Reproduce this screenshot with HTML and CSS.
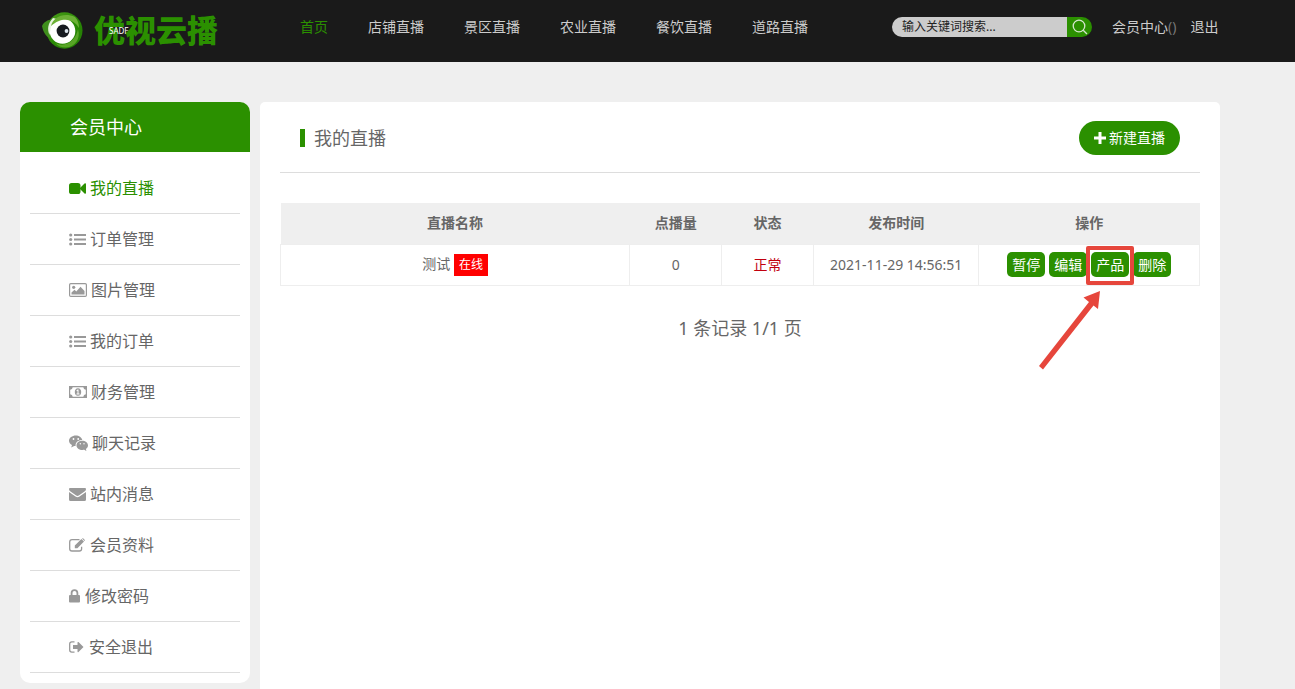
FILE: index.html
```html
<!DOCTYPE html>
<html lang="zh-CN">
<head>
<meta charset="utf-8">
<title>会员中心 - 我的直播</title>
<link rel="stylesheet" href="styles.css">
</head>
<body>
<header class="topbar">
  <a class="logo" href="#">
    <svg class="logo-mark" viewBox="0 0 42 38" aria-hidden="true">
      <defs>
        <linearGradient id="ring" x1="0" y1="0" x2="1" y2="1">
          <stop offset="0" stop-color="#4f9f1c"/>
          <stop offset="0.5" stop-color="#2a8a05"/>
          <stop offset="1" stop-color="#237d04"/>
        </linearGradient>
      </defs>
      <ellipse cx="22.500" cy="19.500" rx="18" ry="18.200" fill="url(#ring)"/>
      <path d="M0 15C2 11 5 9 11 8C7 14 6 21 9 28C3 25 1 20 0 15Z" fill="#3f8f1c"/>
      <circle cx="20.500" cy="20" r="12.800" fill="#fff"/>
      <path d="M11 7C6 12 5 18 7.500 24L9 16Q11 11 15 8Z" fill="#e9f4e2"/>
      <path d="M9 15C11 6 22 1 33 6C36 9 37 13 37 17C33 9 21 4 9 15Z" fill="#6bb035"/>
      <path d="M13 32C23 37 34 30 36 18C39 28 33 36 24 36.500C19 36.500 16 35 13 32Z" fill="#58a426"/>
      <circle cx="21" cy="20" r="6.400" fill="#171a20"/>
      <circle cx="24.500" cy="20" r="1.900" fill="#dbe4ec"/>
    </svg>
    <span class="logo-name">优视云播<span class="logo-tag">SADF</span></span>
  </a>
  <nav class="mainnav" aria-label="主导航">
    <a class="is-active" href="#">首页</a>
    <a href="#">店铺直播</a>
    <a href="#">景区直播</a>
    <a href="#">农业直播</a>
    <a href="#">餐饮直播</a>
    <a href="#">道路直播</a>
  </nav>
  <form class="search">
    <input type="text" placeholder="输入关键词搜索..." aria-label="搜索">
    <button type="button" aria-label="搜索">
      <svg width="16" height="16" viewBox="0 0 16 16" fill="none" stroke="#d4e5cc" stroke-width="1.300" aria-hidden="true"><circle cx="7" cy="7" r="5.800"/><path d="M11.200 11.200L15 15"/></svg>
    </button>
  </form>
  <div class="account"><a href="#">会员中心<span class="dim">()</span></a><a href="#">退出</a></div>
</header>

<div class="page">
  <aside class="sidebar">
    <h2>会员中心</h2>
    <ul>
      <li><a class="is-active" href="#"><svg width="17" height="13" viewBox="0 0 17 13" fill="currentColor" aria-hidden="true"><rect x="0" y="1" width="11.500" height="11" rx="2.600"/><path d="M11 6L15.500 1.500Q17 .8 17 2.200V10.800Q17 12.200 15.500 11.500L11 7Z"/></svg>我的直播</a></li>
      <li><a href="#"><svg width="17" height="13" viewBox="0 0 17 13" fill="currentColor" aria-hidden="true"><circle cx="1.700" cy="2" r="1.600"/><circle cx="1.700" cy="6.500" r="1.600"/><circle cx="1.700" cy="11" r="1.600"/><path d="M5 1h12v2H5zM5 5.500h12v2H5zM5 10h12v2H5z"/></svg>订单管理</a></li>
      <li><a href="#"><svg width="18" height="14" viewBox="0 0 18 14" fill="currentColor" aria-hidden="true"><rect x=".6" y=".6" width="16.800" height="12.800" rx="1.200" fill="none" stroke="currentColor" stroke-width="1.200"/><circle cx="4.700" cy="4.300" r="1.600"/><path d="M2.500 11.500V9.500L5.500 6.800L7.300 8.500L11.500 3.800L15.500 8V11.500Z"/></svg>图片管理</a></li>
      <li><a href="#"><svg width="17" height="13" viewBox="0 0 17 13" fill="currentColor" aria-hidden="true"><circle cx="1.700" cy="2" r="1.600"/><circle cx="1.700" cy="6.500" r="1.600"/><circle cx="1.700" cy="11" r="1.600"/><path d="M5 1h12v2H5zM5 5.500h12v2H5zM5 10h12v2H5z"/></svg>我的订单</a></li>
      <li><a href="#"><svg width="18" height="12" viewBox="0 0 18 12" fill="currentColor" aria-hidden="true"><path fill-rule="evenodd" d="M0 0H18V12H0ZM3.700 1.200Q3.500 3.600 1.200 3.800V8.200Q3.500 8.400 3.700 10.800H14.300Q14.500 8.400 16.800 8.200V3.800Q14.500 3.600 14.300 1.200Z"/><path fill-rule="evenodd" d="M9 2.200C11.200 2.200 12.200 4 12.200 6S11.200 9.800 9 9.800S5.800 8 5.800 6S6.800 2.200 9 2.200ZM8.600 3.600L7.400 4.600L7.900 5.200L8.500 4.800V7.600H7.500V8.400H10.500V7.600H9.500V3.600Z"/></svg>财务管理</a></li>
      <li><a href="#"><svg width="19" height="16" viewBox="0 0 19 16" fill="currentColor" aria-hidden="true"><path fill-rule="evenodd" d="M6.800 .5C10 .5 12.700 2.400 13.300 5C9.200 5 6.200 7.300 6.600 11L5.200 11L2.200 12.500L3 10C1.200 9 0 7.600 0 5.800C0 2.800 3.200 .5 6.800 .5ZM4.500 3.100A.9 .9 0 1 0 4.500 4.900A.9 .9 0 1 0 4.500 3.100ZM9.200 3.100A.9 .9 0 1 0 9.200 4.900A.9 .9 0 1 0 9.200 3.100Z"/><path fill-rule="evenodd" d="M13.200 5.800C16.300 5.800 19 7.900 19 10.400C19 11.900 18.100 13.100 16.900 14L17.500 16L15.200 14.800C11 15.600 7.500 13.300 7.500 10.400C7.500 7.900 10 5.800 13.200 5.800ZM11.300 8.100A.7 .7 0 1 0 11.300 9.500A.7 .7 0 1 0 11.300 8.100ZM15 8.100A.7 .7 0 1 0 15 9.500A.7 .7 0 1 0 15 8.100Z"/></svg>聊天记录</a></li>
      <li><a href="#"><svg width="17" height="13" viewBox="0 0 17 13" fill="currentColor" aria-hidden="true"><path d="M1 0H16Q17 0 17 1.200Q17 2.400 15.500 3.600L9.800 7.500Q8.500 8.400 7.200 7.500L1.500 3.600Q0 2.400 0 1.200Q0 0 1 0Z"/><path d="M0 4L6.500 8.500Q8.500 9.900 10.500 8.500L17 4V11.500Q17 13 15.500 13H1.500Q0 13 0 11.500Z"/></svg>站内消息</a></li>
      <li><a href="#"><svg width="17" height="14" viewBox="0 0 17 14" aria-hidden="true"><path d="M10.500 1.600H3Q.7 1.600 .7 3.900V10.700Q.7 13 3 13H10.300Q12.600 13 12.600 10.700V8.800" fill="none" stroke="currentColor" stroke-width="1.300"/><path d="M5.800 7.600L12.400 1L15 3.600L8.400 10.200H5.800ZM13 .5Q13.700 -.2 14.400 .5L15.600 1.700Q16.200 2.300 15.500 3.100Z" fill="currentColor"/></svg>会员资料</a></li>
      <li><a href="#"><svg width="12" height="14" viewBox="0 0 12 14" fill="currentColor" aria-hidden="true"><rect x="0" y="6" width="11" height="7.500" rx="1"/><path d="M2.600 6.500V4A2.900 2.900 0 0 1 8.400 4V6.500" fill="none" stroke="currentColor" stroke-width="1.800"/></svg>修改密码</a></li>
      <li><a href="#"><svg width="16" height="12" viewBox="0 0 16 12" aria-hidden="true"><path d="M5.500 .9H2.800Q.7 .9 .7 3V9Q.7 11.100 2.800 11.100H5.500" fill="none" stroke="currentColor" stroke-width="1.300"/><path d="M4 3.900H8.500V1.500Q8.600 .5 9.500 1.100L14.500 6L9.500 10.900Q8.600 11.500 8.500 10.500V8.100H4Z" fill="currentColor"/></svg>安全退出</a></li>
    </ul>
  </aside>

  <main class="panel">
    <div class="panel-head">
      <h1>我的直播</h1>
      <button type="button" class="btn-new"><svg width="12" height="12" viewBox="0 0 12 12" aria-hidden="true"><path d="M4.500 0H7.500V4.500H12V7.500H7.500V12H4.500V7.500H0V4.500H4.500Z" fill="#fff"/></svg>新建直播</button>
    </div>
    <table class="streams">
      <colgroup><col class="c-name"><col class="c-hits"><col class="c-state"><col class="c-time"><col class="c-ops"></colgroup>
      <thead><tr><th>直播名称</th><th>点播量</th><th>状态</th><th>发布时间</th><th>操作</th></tr></thead>
      <tbody>
        <tr>
          <td>测试 <span class="badge">在线</span></td>
          <td>0</td>
          <td class="ok">正常</td>
          <td>2021-11-29 14:56:51</td>
          <td>
            <div class="ops">
              <button type="button">暂停</button>
              <button type="button">编辑</button>
              <span class="marked"><button type="button">产品</button>
                <svg class="arrow" width="64" height="80" viewBox="0 0 64 80" aria-hidden="true"><path d="M62 0L45.500 6.500L51 11L1 75L5 78.500L55.500 14.500L60 18Z" fill="#e6463c"/></svg>
              </span>
              <button type="button">删除</button>
            </div>
          </td>
        </tr>
      </tbody>
    </table>
    <p class="pager">1 条记录 1/1 页</p>
  </main>
</div>
</body>
</html>
```

FILE: styles.css
```css
*, *::after { box-sizing: border-box; }

body {
  margin: 0;
  min-height: 100vh;
  display: flex;
  flex-direction: column;
  background: #efefef;
  color: #666;
  font: 14px/20px "Noto Sans", "Noto Sans CJK SC", sans-serif;
}

a { color: inherit; text-decoration: none; }
button, input { font: inherit; border: 0; padding: 0; margin: 0; }
button { cursor: pointer; }
svg { display: block; flex: none; }

.topbar {
  display: flex;
  align-items: center;
  height: 62px;
  padding: 0 20px 8px 42px;
  background: #1a1a1a;
  color: #ccc;
  white-space: nowrap;
}

.logo { display: flex; align-items: center; gap: 10px; width: 258px; padding-top: 6px; }
.logo-mark { width: 42px; height: 38px; }
.logo-name {
  position: relative;
  color: #2b9000;
  font-size: 31px;
  line-height: 38px;
  font-weight: 900;
}
.logo-tag {
  position: absolute;
  left: 15px;
  top: 15px;
  color: #fff;
  font-size: 8px;
  line-height: 10px;
  font-weight: 400;
}

.mainnav { display: flex; gap: 40px; }
.mainnav .is-active { color: #2b9000; }

.search {
  display: flex;
  width: 200px;
  height: 20px;
  margin-left: 84px;
  border-radius: 10px;
  overflow: hidden;
}
.search input {
  flex: 1;
  min-width: 0;
  padding-left: 10px;
  background: #ccc;
  color: #222;
  font-size: 12px;
}
.search input::placeholder { color: #222; opacity: 1; }
.search button {
  display: grid;
  place-items: center;
  width: 25px;
  background: #2b9000;
}

.account { display: flex; gap: 14px; margin-left: 20px; }
.dim { color: #777; }

.page {
  flex: 1;
  display: flex;
  gap: 10px;
  width: calc(100% - 40px);
  max-width: 1200px;
  margin: 40px 20px 0;
}

.sidebar {
  flex: 0 0 230px;
  align-self: flex-start;
  border-radius: 10px;
  overflow: hidden;
  background: #fff;
}
.sidebar h2 {
  margin: 0;
  padding-left: 50px;
  background: #2b9000;
  color: #fff;
  font-size: 18px;
  line-height: 50px;
  font-weight: 400;
}
.sidebar ul { margin: 0; padding: 11px 10px 10px; list-style: none; }
.sidebar li { border-bottom: 1px solid #ddd; }
.sidebar a {
  display: flex;
  align-items: center;
  gap: 4px;
  height: 50px;
  padding-left: 39px;
  font-size: 16px;
}
.sidebar svg { color: #999; }
.sidebar .is-active, .sidebar .is-active svg { color: #2b9000; }

.panel {
  flex: 1;
  min-width: 0;
  padding: 0 20px;
  border-radius: 5px 5px 0 0;
  background: #fff;
}
.panel-head {
  display: flex;
  align-items: center;
  justify-content: space-between;
  height: 71px;
  padding: 1px 20px 0;
  border-bottom: 1px solid #ddd;
}
.panel-head h1 {
  margin: 0;
  padding-left: 9px;
  border-left: 5px solid #2b9000;
  font-size: 18px;
  line-height: 18px;
  font-weight: 400;
}
.btn-new {
  display: flex;
  align-items: center;
  gap: 3px;
  height: 34px;
  padding: 0 15px;
  border-radius: 17px;
  background: #2b9000;
  color: #fff;
}

.streams {
  width: 100%;
  margin-top: 30px;
  border-collapse: collapse;
  table-layout: fixed;
  text-align: center;
}
.c-name { width: 38%; }
.c-hits, .c-state { width: 10%; }
.c-time { width: 18%; }
.c-ops { width: 24%; }
.streams th { height: 41px; padding: 0; background: #efefef; font-weight: 700; }
.streams td { height: 41px; padding: 0; border: 1px solid #eee; }
.badge {
  display: inline-block;
  padding: 0 5px;
  background: #f00;
  color: #fff;
  font-size: 12px;
  line-height: 22px;
}
.streams .ok { color: #c1000f; }

.ops { display: flex; justify-content: center; gap: 4px; }
.ops button {
  display: block;
  height: 25px;
  padding: 0 5px;
  border-radius: 5px;
  background: #2b9000;
  color: #fff;
}
.marked { position: relative; }
.marked::after {
  content: "";
  position: absolute;
  inset: -6px -5px -8px;
  z-index: 1;
  border: 4px solid #e6463c;
  border-radius: 2px;
  pointer-events: none;
}
.arrow { position: absolute; right: 27px; top: 39px; z-index: 1; }

.pager { margin: 30px 0 0; text-align: center; font-size: 18px; line-height: 24px; }
```
